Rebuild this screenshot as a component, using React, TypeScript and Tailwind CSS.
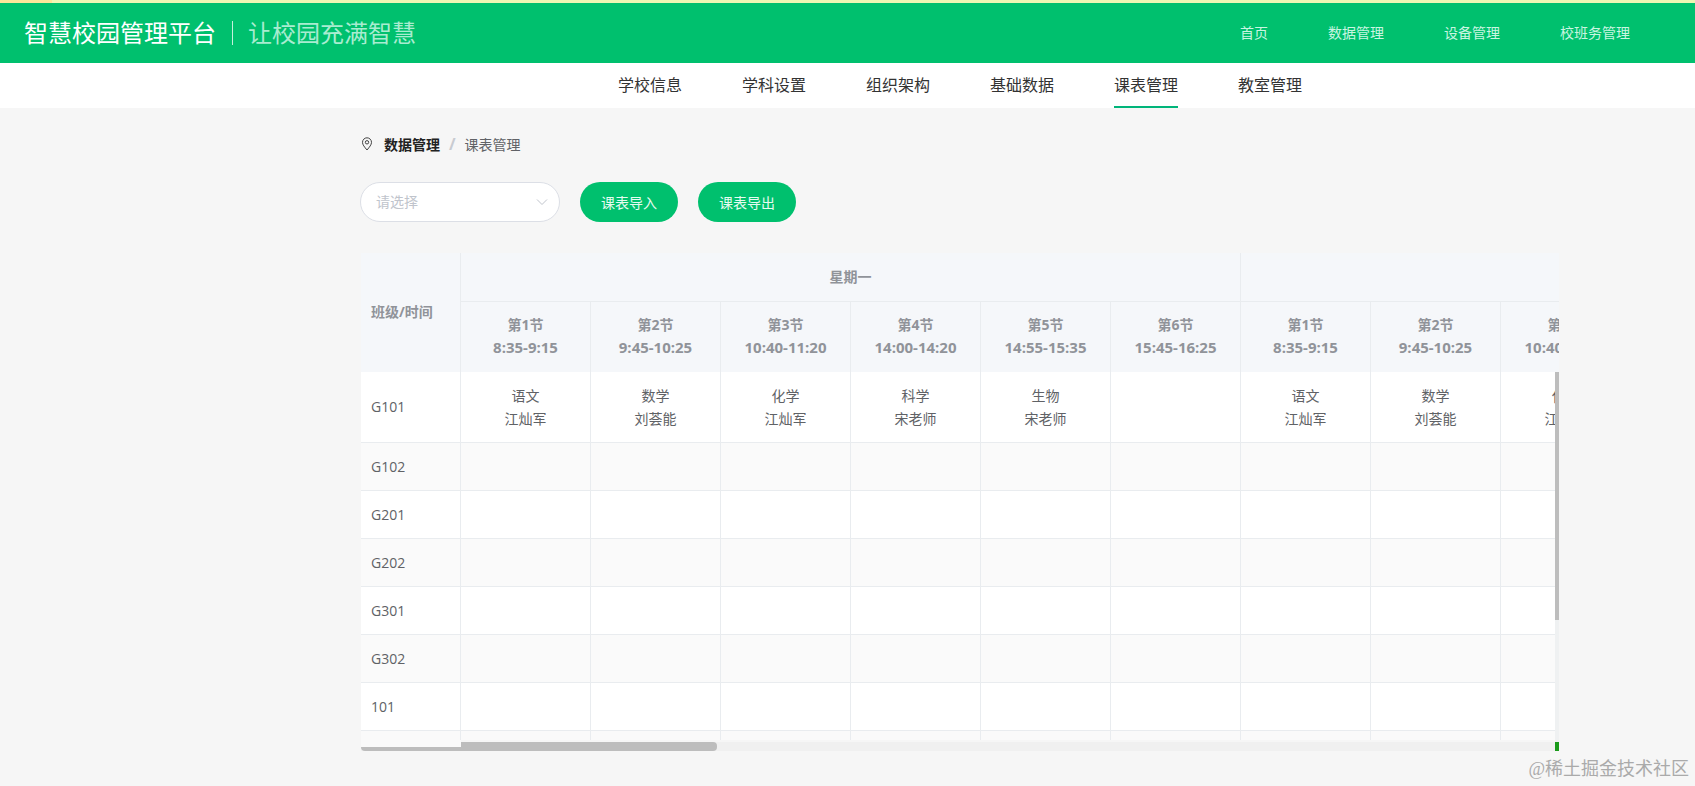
import React from "react";

const FONT = "[font-family:'Open_Sans','Noto_Sans_CJK_SC',sans-serif]";

const topNav = [
  { label: "首页", cls: "w-[29px]" },
  { label: "数据管理", cls: "w-[57px]" },
  { label: "设备管理", cls: "w-[57px]" },
  { label: "校班务管理", cls: "w-[71px]" },
];
const subNav = ["学校信息", "学科设置", "组织架构", "基础数据", "课表管理", "教室管理"];
const periods = [
  ["第1节", "8:35-9:15"],
  ["第2节", "9:45-10:25"],
  ["第3节", "10:40-11:20"],
  ["第4节", "14:00-14:20"],
  ["第5节", "14:55-15:35"],
  ["第6节", "15:45-16:25"],
];
const lessons: ([string, string] | null)[] = [
  ["语文", "江灿军"],
  ["数学", "刘荟能"],
  ["化学", "江灿军"],
  ["科学", "宋老师"],
  ["生物", "宋老师"],
  null,
];
const rows = ["G102", "G201", "G202", "G301", "G302", "101"];
const dayPeriods = [...periods, ...periods.slice(0, 3)];
const dayLessons = [...lessons, ...lessons.slice(0, 3)];

function Pin() {
  return (
    <svg width="12" height="14" viewBox="0 0 12 14" fill="none" stroke="#444" strokeWidth="1">
      <path d="M6 13 C3.5 10 1.5 7.8 1.5 5.3 A4.5 4.5 0 0 1 10.5 5.3 C10.5 7.8 8.5 10 6 13 Z" />
      <circle cx="6" cy="5.3" r="1.7" />
    </svg>
  );
}

function Chevron() {
  return (
    <svg width="12" height="8" viewBox="0 0 12 8" fill="none" stroke="#c0c4cc" strokeWidth="1">
      <path d="M1 1.5 L6 6.5 L11 1.5" />
    </svg>
  );
}

export default function App() {
  return (
    <div className={`relative w-[1695px] h-[786px] overflow-hidden bg-[#f6f6f6] ${FONT}`}>
      {/* top strip */}
      <div className="flex h-[3px] bg-[#eef7b4]">
        <div className="w-[52px] bg-[#fbe69a]" />
      </div>

      {/* header */}
      <header className="flex h-[60px] items-center justify-between bg-[#00c06e] pl-[24px] pr-[64px]">
        <div className="flex items-center">
          <span className="text-[24px] leading-[32px] text-white">智慧校园管理平台</span>
          <span className="ml-[16px] mr-[15px] h-[24px] w-px bg-[#c5f0dc]" />
          <span className="text-[24px] leading-[32px] text-[#a8ecd0]">让校园充满智慧</span>
        </div>
        <nav className="flex gap-[59px] pb-[2px] text-[14px] text-[#c9f5e1]">
          {topNav.map((n) => (
            <span key={n.label} className={`${n.cls} whitespace-nowrap`}>
              {n.label}
            </span>
          ))}
        </nav>
      </header>

      {/* sub nav */}
      <nav className="flex h-[45px] justify-center bg-white pl-[225px] text-[16px] text-[#333]">
        <div className="flex gap-[60px]">
          {subNav.map((s) => (
            <div
              key={s}
              className={`flex h-[45px] items-center whitespace-nowrap border-b-2 pt-[1px] ${
                s === "课表管理" ? "border-[#00b57a]" : "border-transparent"
              }`}
            >
              {s}
            </div>
          ))}
        </div>
      </nav>

      <main className="ml-[361px] w-[1198px]">
        {/* breadcrumb */}
        <div className="mt-[26px] flex h-[20px] items-center text-[14px]">
          <Pin />
          <span className="ml-[11px] font-bold text-[#222]">数据管理</span>
          <span className="ml-[9px] mr-[9px] text-[16px] font-bold leading-[20px] text-[#c8cbd1]">/</span>
          <span className="text-[#606266]">课表管理</span>
        </div>

        {/* filters */}
        <div className="-ml-px mt-[28px] flex items-center">
          <div className="flex h-[40px] w-[200px] items-center justify-between rounded-full border border-[#dcdfe6] bg-white pb-[1px] pl-[15px] pr-[11px]">
            <span className="text-[14px] text-[#c0c4cc]">请选择</span>
            <Chevron />
          </div>
          <button className="ml-[20px] h-[40px] w-[98px] rounded-full bg-[#00c06e] text-[14px] text-[#e6fbf1]">
            课表导入
          </button>
          <button className="ml-[20px] h-[40px] w-[98px] rounded-full bg-[#00c06e] text-[14px] text-[#e6fbf1]">
            课表导出
          </button>
        </div>

        {/* table */}
        <div className="relative mt-[31px] w-[1198px]">
          <div className="h-[487px] overflow-hidden">
            <div className="flex w-max">
              {/* fixed first column */}
              <div className="w-[100px] shrink-0 border-r border-[#e9ecef]">
                <div className="flex h-[119px] items-center bg-[#f5f7fa] pb-[2px] pl-[10px] text-[14px] font-bold text-[#909399]">
                  班级/时间
                </div>
                <div className="flex h-[71px] items-center border-b border-[#e9ecef] bg-white pl-[10px] pb-[1px] text-[14px] text-[#606266]">
                  G101
                </div>
                {rows.map((r, i) => (
                  <div
                    key={r}
                    className={`flex h-[48px] items-center border-b border-[#e9ecef] pl-[10px] text-[14px] text-[#606266] ${
                      i % 2 === 0 ? "bg-[#fafafa]" : "bg-white"
                    }`}
                  >
                    {r}
                  </div>
                ))}
                <div className="h-[17px] bg-[#fafafa]" />
              </div>

              {/* scrolling columns */}
              <div className="w-[1170px]">
                {/* day row */}
                <div className="flex h-[49px] border-b border-[#e9ecef] bg-[#f5f7fa] text-[14px] font-bold text-[#909399]">
                  <div className="flex w-[780px] shrink-0 items-center justify-center border-r border-[#e9ecef] pb-[1px]">
                    星期一
                  </div>
                  <div className="w-[390px] shrink-0" />
                </div>
                {/* period row */}
                <div className="flex h-[70px] bg-[#f5f7fa] text-[14px] font-bold text-[#909399]">
                  {dayPeriods.map((p, i) => (
                    <div
                      key={i}
                      className="w-[130px] shrink-0 border-r border-[#e9ecef] pt-[11px] text-center leading-[23px]"
                    >
                      <div>{p[0]}</div>
                      <div className="text-[15px]">{p[1]}</div>
                    </div>
                  ))}
                </div>
                {/* G101 */}
                <div className="flex h-[71px] border-b border-[#e9ecef] bg-white text-[14px] text-[#606266]">
                  {dayLessons.map((l, i) => (
                    <div
                      key={i}
                      className="w-[130px] shrink-0 border-r border-[#e9ecef] pt-[12px] text-center leading-[23px]"
                    >
                      {l && (
                        <>
                          <div>{l[0]}</div>
                          <div>{l[1]}</div>
                        </>
                      )}
                    </div>
                  ))}
                </div>
                {rows.map((r, ri) => (
                  <div
                    key={r}
                    className={`flex h-[48px] border-b border-[#e9ecef] ${
                      ri % 2 === 0 ? "bg-[#fafafa]" : "bg-white"
                    }`}
                  >
                    {dayPeriods.map((_, i) => (
                      <div key={i} className="w-[130px] shrink-0 border-r border-[#e9ecef]" />
                    ))}
                  </div>
                ))}
                <div className="flex h-[17px] bg-[#fafafa]">
                  {dayPeriods.map((_, i) => (
                    <div key={i} className="w-[130px] shrink-0 border-r border-[#e9ecef]" />
                  ))}
                </div>
              </div>
            </div>
          </div>

          {/* horizontal scrollbar */}
          <div className="mt-[2px] flex h-[9px] bg-[#f0f0f0]">
            <div className="w-[356px] rounded-[4px] bg-[#bdbdbd]" />
            <div className="flex-1" />
          </div>

          {/* fixed column foot lying over the scrollbar */}
          <div className="absolute bottom-[4px] left-0 h-[7px] w-[100px] bg-[#fafafa]" />

          {/* vertical scrollbar overlay */}
          <div className="absolute bottom-0 right-0 top-[119px] w-[4px] bg-[#eff1f2]" />
          <div className="absolute right-0 top-[119px] h-[248px] w-[4px] bg-[#bdbdbd]" />
          <div className="absolute bottom-0 right-0 h-[9px] w-[4px] bg-[#1a9a1a]" />
        </div>
      </main>

      {/* watermark */}
      <div className="absolute right-[6px] top-[757px] font-['Liberation_Serif','Noto_Sans_CJK_SC',serif] text-[18px] leading-[24px] text-[#aaaaaa]">
        @稀土掘金技术社区
      </div>
    </div>
  );
}
